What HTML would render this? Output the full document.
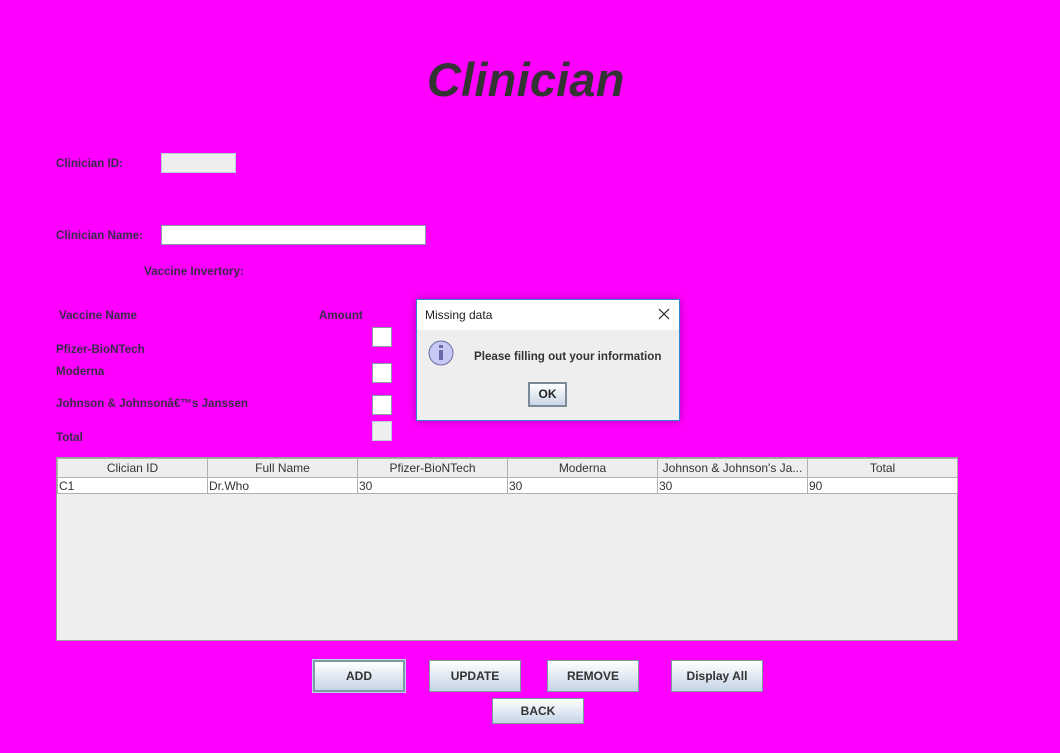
<!DOCTYPE html>
<html><head><style>
body{margin:0;width:1060px;height:753px;background:#ff00ff;position:relative;overflow:hidden;font-family:"Liberation Sans",sans-serif;}
.a{position:absolute;}
.l{position:absolute;font-size:11.6px;font-weight:bold;color:#3a2a4a;white-space:nowrap;}
.box{position:absolute;background:#fff;border:1px solid #8a9aa8;box-sizing:border-box;box-shadow:inset -1px -1px 0 #fff;}
.btn{position:absolute;height:32px;box-sizing:border-box;border:1px solid #7a9a9e;background:linear-gradient(#fff,#e8eef6 40%,#c4d4e6);font-size:12px;font-weight:bold;color:#333;text-align:center;line-height:30px;}
table{border-collapse:collapse;table-layout:fixed;}
td{border:1px solid #b0b0b0;height:15px;padding:0 1px;font-size:12px;color:#333;overflow:hidden;white-space:nowrap;}
th{border:1px solid #b0b0b0;height:18px;padding:0;font-size:12px;font-weight:normal;color:#333;background:#eeeeee;}
</style></head><body>
<div class="a" style="left:427px;top:52px;font-size:47px;font-weight:bold;font-style:italic;color:#333;letter-spacing:0.2px;">Clinician</div>
<div class="l" style="left:56px;top:157px;">Clinician ID:</div>
<div class="a" style="left:161px;top:153px;width:75px;height:20px;background:#eeeeee;border:1px solid #b8d0dc;box-sizing:border-box;"></div>
<div class="l" style="left:56px;top:229px;">Clinician Name:</div>
<div class="box" style="left:161px;top:225px;width:265px;height:20px;"></div>
<div class="l" style="left:144px;top:265px;">Vaccine Invertory:</div>
<div class="l" style="left:59px;top:309px;">Vaccine Name</div>
<div class="l" style="left:319px;top:309px;">Amount</div>
<div class="l" style="left:56px;top:343px;">Pfizer-BioNTech</div>
<div class="l" style="left:56px;top:365px;">Moderna</div>
<div class="l" style="left:56px;top:397px;">Johnson &amp; Johnsonâ€™s Janssen</div>
<div class="l" style="left:56px;top:431px;">Total</div>
<div class="box" style="left:372px;top:327px;width:20px;height:20px;"></div>
<div class="box" style="left:372px;top:363px;width:20px;height:20px;"></div>
<div class="box" style="left:372px;top:395px;width:20px;height:20px;"></div>
<div class="a" style="left:372px;top:421px;width:20px;height:20px;background:#eee;border:1px solid #b8d0dc;box-sizing:border-box;"></div>

<div class="a" style="left:56px;top:457px;width:902px;height:184px;background:#eeeeee;border:1px solid #9a9a9a;box-sizing:border-box;">
<table style="width:900px;">
<colgroup><col style="width:150px"><col style="width:150px"><col style="width:150px"><col style="width:150px"><col style="width:150px"><col style="width:150px"></colgroup>
<tr><th>Clician ID</th><th>Full Name</th><th>Pfizer-BioNTech</th><th>Moderna</th><th>Johnson &amp; Johnson's Ja...</th><th>Total</th></tr>
<tr style="background:#fff"><td>C1</td><td>Dr.Who</td><td>30</td><td>30</td><td>30</td><td>90</td></tr>
</table></div>

<div class="btn" style="left:313px;top:660px;width:92px;border:2px solid #7d99a8;outline:1px solid #b8d8e8;line-height:28px;">ADD</div>
<div class="btn" style="left:429px;top:660px;width:92px;">UPDATE</div>
<div class="btn" style="left:547px;top:660px;width:92px;">REMOVE</div>
<div class="btn" style="left:671px;top:660px;width:92px;">Display All</div>
<div class="btn" style="left:492px;top:698px;width:92px;height:26px;line-height:24px;">BACK</div>

<div class="a" style="left:416px;top:299px;width:264px;height:122px;border:1px solid #2a8ad8;box-sizing:border-box;background:#eeeeee;box-shadow:0 0 8px rgba(0,0,0,0.3);">
<div style="height:30px;background:#fff;position:relative;">
<span style="position:absolute;left:8px;top:8px;font-size:12px;color:#222;">Missing data</span>
<svg style="position:absolute;left:241px;top:8px" width="12" height="12"><path d="M1 1L11 11M11 1L1 11" stroke="#222" stroke-width="1.2"/></svg>
</div>
<svg style="position:absolute;left:11px;top:40px" width="28" height="28"><circle cx="13" cy="13" r="12" fill="#c8c8f4" stroke="#6a6aa8"/><rect x="11" y="10" width="4" height="10" fill="#6a6aa8"/><rect x="11" y="5" width="4" height="3" fill="#6a6aa8"/></svg>
<div class="a" style="left:57px;top:50px;font-size:11.6px;font-weight:bold;color:#333;">Please filling out your information</div>
<div class="a" style="left:111px;top:82px;width:39px;height:25px;border:2px solid #7a8a98;box-sizing:border-box;background:linear-gradient(#fff,#c8d6e6);font-size:12px;font-weight:bold;color:#222;text-align:center;line-height:21px;">OK</div>
</div>
</body></html>
